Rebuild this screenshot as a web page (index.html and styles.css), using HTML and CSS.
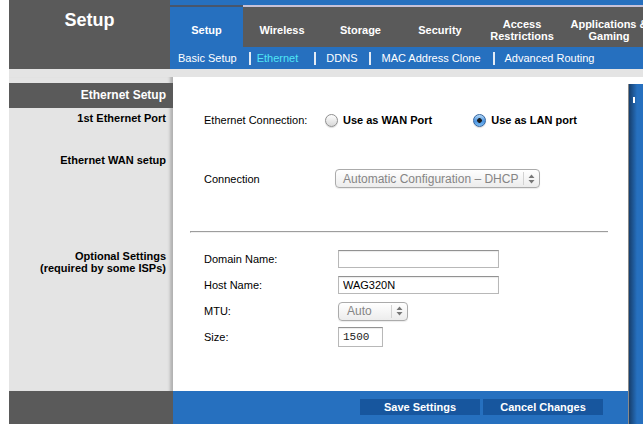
FILE: index.html
```html
<!DOCTYPE html>
<html lang="en">
<head>
  <meta charset="UTF-8">
  <meta name="viewport" content="width=device-width, initial-scale=1.0">
  <title>Setup - Ethernet</title>
  <link rel="stylesheet" href="styles.css">
</head>
<body>
  <div class="page">

    <!-- Header: area title and tab menu -->
    <header class="top">
      <div class="area-title">Setup</div>
      <nav class="menu">
        <div class="menu-strip"></div>
        <ul class="tabs">
          <li class="tab tab-setup active">Setup</li>
          <li class="tab tab-wireless">Wireless</li>
          <li class="tab tab-storage">Storage</li>
          <li class="tab tab-security">Security</li>
          <li class="tab tab-access">Access<br>Restrictions</li>
          <li class="tab tab-apps">Applications &amp;<br>Gaming</li>
        </ul>
        <ul class="subnav">
          <li>Basic Setup</li>
          <li class="sep"></li>
          <li class="current">Ethernet</li>
          <li class="sep"></li>
          <li>DDNS</li>
          <li class="sep"></li>
          <li>MAC Address Clone</li>
          <li class="sep"></li>
          <li>Advanced Routing</li>
        </ul>
      </nav>
    </header>

    <div class="band"></div>

    <div class="layout">
      <!-- Left column with section labels -->
      <aside class="side">
        <div class="side-body">
          <h2 class="side-head">Ethernet Setup</h2>
          <p class="side-label label-port">1st Ethernet Port</p>
          <p class="side-label label-wan">Ethernet WAN setup</p>
          <p class="side-label label-optional">Optional Settings<br>(required by some ISPs)</p>
        </div>
        <div class="side-foot"></div>
      </aside>

      <!-- Main settings panel -->
      <main class="center">
        <form class="panel">
          <div class="row row-port">
            <span class="row-label">Ethernet Connection:</span>
            <label class="radio-option">
              <span class="radio"></span>
              Use as WAN Port
            </label>
            <label class="radio-option">
              <span class="radio checked"></span>
              Use as LAN port
            </label>
          </div>

          <div class="row row-wan">
            <span class="row-label">Connection</span>
            <div class="select select-wide">
              <span class="select-value">Automatic Configuration &ndash; DHCP</span>
              <span class="select-arrows">
                <svg width="7" height="10" viewBox="0 0 7 10"><path d="M3.5 0.5 L6.5 4 H0.5 Z M3.5 9.5 L6.5 6 H0.5 Z" fill="#777"/></svg>
              </span>
            </div>
          </div>

          <div class="divider"></div>

          <div class="row row-field row-first">
            <span class="row-label">Domain Name:</span>
            <input class="text-input" type="text" value="">
          </div>
          <div class="row row-field">
            <span class="row-label">Host Name:</span>
            <input class="text-input" type="text" value="WAG320N">
          </div>
          <div class="row row-field">
            <span class="row-label">MTU:</span>
            <div class="select select-small">
              <span class="select-value">Auto</span>
              <span class="select-arrows">
                <svg width="7" height="10" viewBox="0 0 7 10"><path d="M3.5 0.5 L6.5 4 H0.5 Z M3.5 9.5 L6.5 6 H0.5 Z" fill="#777"/></svg>
              </span>
            </div>
          </div>
          <div class="row row-field">
            <span class="row-label">Size:</span>
            <input class="text-input size-input" type="text" value="1500">
          </div>
        </form>

        <div class="actions">
          <button type="button">Save Settings</button>
          <button type="button">Cancel Changes</button>
        </div>
      </main>

      <!-- Help column (mostly off screen) -->
      <div class="help"><span class="help-mark"></span></div>
    </div>

  </div>
</body>
</html>
```

FILE: styles.css
```css
* {
  box-sizing: border-box;
  margin: 0;
  padding: 0;
}

html, body {
  overflow: hidden;
}

body {
  font-family: "Liberation Sans", Arial, sans-serif;
  font-size: 11px;
  color: #000;
  background-color: #fff;
}

ul {
  list-style: none;
}

.page {
  margin-left: 9px;
  width: 720px;
}

/* Header */
.top {
  display: flex;
  height: 69px;
}

.area-title {
  width: 161px;
  padding-top: 9px;
  background-color: #5a5a5a;
  color: #fff;
  font-size: 18px;
  font-weight: bold;
  line-height: 22px;
  text-align: center;
}

.menu {
  flex: 1;
  display: flex;
  flex-direction: column;
}

.menu-strip {
  height: 5px;
  background-color: #2670bf;
}

.tabs {
  display: flex;
  height: 42px;
  background-color: #5a5a5a;
}

.tab {
  display: flex;
  align-items: center;
  justify-content: center;
  flex-shrink: 0;
  padding-top: 6px;
  border-top: 2px solid #c6c1d8;
  color: #fff;
  font-weight: bold;
  line-height: 12px;
  text-align: center;
  white-space: nowrap;
}

.tab.active {
  background-color: #2670bf;
  border-top-color: #48566c;
}

.tab-setup { width: 73px; }
.tab-wireless { width: 78px; }
.tab-storage { width: 79px; }
.tab-security { width: 80px; }
.tab-access { width: 84px; }
.tab-apps { width: 90px; }

.subnav {
  display: flex;
  align-items: center;
  height: 22px;
  padding-left: 8px;
  background-color: #2670bf;
  color: #fff;
  white-space: nowrap;
}

.subnav .current {
  margin: 0 4px 0 -4px;
  color: #4fe6f6;
}

.subnav .sep {
  width: 2px;
  height: 13px;
  margin: 0 10px 0 12px;
  background-color: #e3ebf5;
}

.band {
  height: 8px;
  background-color: #e4e4e4;
}

/* Three columns */
.layout {
  display: flex;
}

.side {
  width: 164px;
  display: flex;
  flex-direction: column;
}

.side-body {
  height: 314px;
  padding-top: 6px;
  background-color: #e4e4e4;
  box-shadow: inset -5px 0 3px -2px rgba(0, 0, 0, 0.22);
}

.side-head {
  height: 25px;
  padding-right: 7px;
  background-color: #5a5a5a;
  color: #fff;
  font-size: 12px;
  line-height: 25px;
  text-align: right;
}

.side-label {
  padding-right: 7px;
  font-weight: bold;
  line-height: 14px;
  text-align: right;
}

.label-port { margin-top: 3px; }
.label-wan { margin-top: 28px; }

.label-optional {
  margin-top: 83px;
  line-height: 12px;
}

.side-foot {
  height: 33px;
  background-color: #5a5a5a;
}

.center {
  width: 455px;
  display: flex;
  flex-direction: column;
}

.panel {
  height: 314px;
  background-color: #fff;
}

/* Form rows */
.row {
  display: flex;
  align-items: center;
  padding-left: 31px;
}

.row-port {
  margin-top: 33px;
  height: 20px;
}

.row-port .row-label { width: 121px; }

.row-wan {
  margin-top: 39px;
  height: 19px;
}

.row-wan .row-label { width: 131px; }

.row-field {
  height: 26px;
}

.row-field .row-label { width: 134px; }

.row-first {
  margin-top: 13px;
}

.divider {
  width: 418px;
  height: 2px;
  margin: 43px 0 0 17px;
  border-top: 1px solid #9d9d9d;
  border-left: 1px solid #9d9d9d;
  border-bottom: 1px solid #f0f0f0;
}

.radio-option {
  display: flex;
  align-items: center;
  gap: 5px;
  font-weight: bold;
}

.radio-option + .radio-option {
  margin-left: 41px;
}

.radio {
  width: 13px;
  height: 13px;
  margin-top: 1px;
  border: 1px solid #8f8f8f;
  border-radius: 50%;
  background: linear-gradient(#fdfdfd, #d9d9d9);
  box-shadow: 0 1px 1px rgba(0, 0, 0, 0.15);
}

.radio.checked {
  border-color: #34649e;
  background:
    radial-gradient(circle, #1b1b1b 0 2px, transparent 2.6px),
    linear-gradient(#b7dbf8, #4b93e0 55%, #7dbdf4);
}

.text-input {
  width: 161px;
  height: 18px;
  padding: 0 4px;
  border: 1px solid #b8b8b8;
  border-top-color: #929292;
  box-shadow: inset 0 1px 1px rgba(0, 0, 0, 0.08);
  font-family: "Liberation Sans", Arial, sans-serif;
  font-size: 11px;
  color: #000;
  outline: none;
}

.size-input {
  width: 45px;
  height: 20px;
  font-family: "Liberation Mono", monospace;
  color: #222;
}

.select {
  display: flex;
  align-items: center;
  height: 19px;
  border: 1px solid #ababab;
  border-radius: 4px;
  background: linear-gradient(#ffffff, #ececec);
  box-shadow: 0 1px 1px rgba(0, 0, 0, 0.08);
  color: #858585;
  font-size: 12px;
}

.select-wide { width: 205px; }
.select-small { width: 70px; }

.select-value {
  flex: 1;
  padding-left: 7px;
  white-space: nowrap;
}

.select-small .select-value {
  padding-left: 8px;
}

.select-arrows {
  display: flex;
  align-items: center;
  justify-content: center;
  width: 16px;
  height: 13px;
  border-left: 1px solid #d2d2d2;
}

/* Footer buttons */
.actions {
  display: flex;
  justify-content: flex-end;
  align-items: flex-start;
  gap: 3px;
  height: 33px;
  padding: 8px 25px 0 0;
  background-color: #2670bf;
}

.actions button {
  width: 120px;
  height: 16px;
  border: none;
  background-color: #17569e;
  color: #fff;
  font-family: "Liberation Sans", Arial, sans-serif;
  font-size: 11px;
  font-weight: bold;
  cursor: pointer;
}

.help {
  width: 60px;
  height: 340px;
  margin-top: 7px;
  border-left: 1px solid #8a8a8a;
  background: linear-gradient(to right, #163e6c, #2670bf 8px);
}

.help-mark {
  display: block;
  width: 2px;
  height: 6px;
  margin: 13px 0 0 4px;
  background-color: #fff;
}
```
